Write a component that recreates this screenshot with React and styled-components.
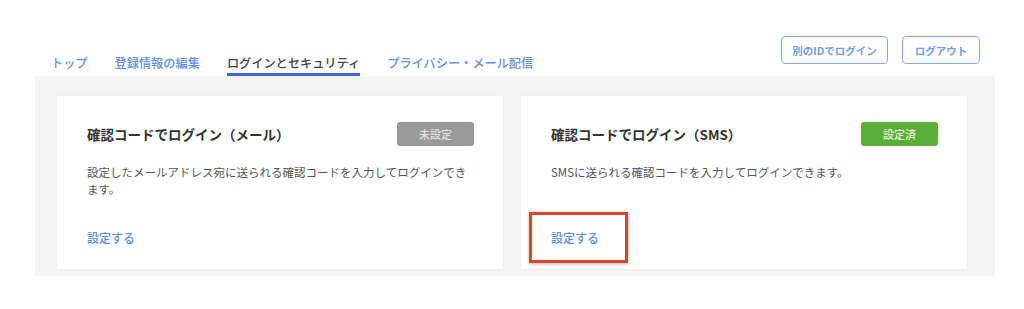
import React from "react";
import styled, { createGlobalStyle } from "styled-components";

const Global = createGlobalStyle`
  html, body { margin: 0; padding: 0; background: #fff; }
  body { font-family: "Noto Sans CJK JP", "Noto Sans", sans-serif; }
`;

const Page = styled.div`
  padding: 0 29px 0 35px;
  width: 960px;
`;

const Header = styled.header`
  display: flex;
  justify-content: space-between;
  align-items: flex-end;
  height: 76px;
`;

const Tabs = styled.nav`
  display: flex;
  gap: 27px;
  padding-left: 16px;
`;

const Tab = styled.a`
  font-size: 12.2px;
  line-height: 16px;
  font-weight: 500;
  padding-top: 1px;
  padding-bottom: 2px;
  border-bottom: 3px solid ${(p) => (p.$active ? "#3d66d6" : "transparent")};
  color: ${(p) => (p.$active ? "#444" : "#5e90e8")};
  white-space: nowrap;
  cursor: pointer;
`;

const Actions = styled.div`
  display: flex;
  gap: 14px;
  align-self: flex-start;
  margin-top: 36px;
  margin-right: 15px;
`;

const OutlineButton = styled.button`
  height: 28px;
  width: ${(p) => p.$w}px;
  box-sizing: border-box;
  border: 1.5px solid #86aaf0;
  border-radius: 4px;
  background: #fff;
  color: #739ce9;
  font-family: inherit;
  font-size: 10.5px;
  font-weight: 700;
  padding: 0;
  cursor: pointer;
`;

const Panel = styled.section`
  background: #f4f4f4;
  display: flex;
  gap: 19px;
  padding: 20px 0 7px 22px;
`;

const Card = styled.div`
  position: relative;
  width: 445px;
  height: 173px;
  box-sizing: border-box;
  background: #fff;
  box-shadow: 0 0 2px rgba(0, 0, 0, 0.06);
  padding: 26px 28px 23px 30px;
  display: flex;
  flex-direction: column;
`;

const TitleRow = styled.div`
  display: flex;
  justify-content: space-between;
  align-items: center;
  height: 24px;
`;

const Title = styled.h3`
  margin: 0;
  font-size: 13.5px;
  font-weight: 700;
  color: #333;
  line-height: 20px;
`;

const Badge = styled.span`
  width: 77px;
  height: 24px;
  border-radius: 3px;
  background: ${(p) => p.$bg};
  color: ${(p) => p.$fg};
  font-size: 11px;
  font-weight: 500;
  display: flex;
  align-items: center;
  justify-content: center;
`;

const Desc = styled.p`
  margin: 18px 0 0;
  font-size: 11.5px;
  line-height: 17px;
  color: #555;
`;

const Link = styled.a`
  margin-top: auto;
  font-size: 12px;
  line-height: 16px;
  font-weight: 500;
  color: #5b8de8;
  cursor: pointer;
`;

const Highlight = styled.div`
  position: absolute;
  left: 8px;
  top: 116px;
  width: 99px;
  height: 51px;
  box-sizing: border-box;
  border: 3px solid #e1432a;
  box-shadow: 0 1px 3px rgba(0, 0, 0, 0.3);
  pointer-events: none;
`;

export default function App() {
  return (
    <>
      <Global />
      <Page>
        <Header>
          <Tabs>
            <Tab>トップ</Tab>
            <Tab>登録情報の編集</Tab>
            <Tab $active>ログインとセキュリティ</Tab>
            <Tab>プライバシー・メール配信</Tab>
          </Tabs>
          <Actions>
            <OutlineButton $w={107}>別のIDでログイン</OutlineButton>
            <OutlineButton $w={78}>ログアウト</OutlineButton>
          </Actions>
        </Header>
        <Panel>
          <Card>
            <TitleRow>
              <Title>確認コードでログイン（メール）</Title>
              <Badge $bg="#999999" $fg="#e2e2e2">未設定</Badge>
            </TitleRow>
            <Desc>
              設定したメールアドレス宛に送られる確認コードを入力してログインできます。
            </Desc>
            <Link>設定する</Link>
          </Card>
          <Card>
            <TitleRow>
              <Title>確認コードでログイン（SMS）</Title>
              <Badge $bg="#5aaf38" $fg="#e4f3da">設定済</Badge>
            </TitleRow>
            <Desc>SMSに送られる確認コードを入力してログインできます。</Desc>
            <Link>設定する</Link>
            <Highlight />
          </Card>
        </Panel>
      </Page>
    </>
  );
}
